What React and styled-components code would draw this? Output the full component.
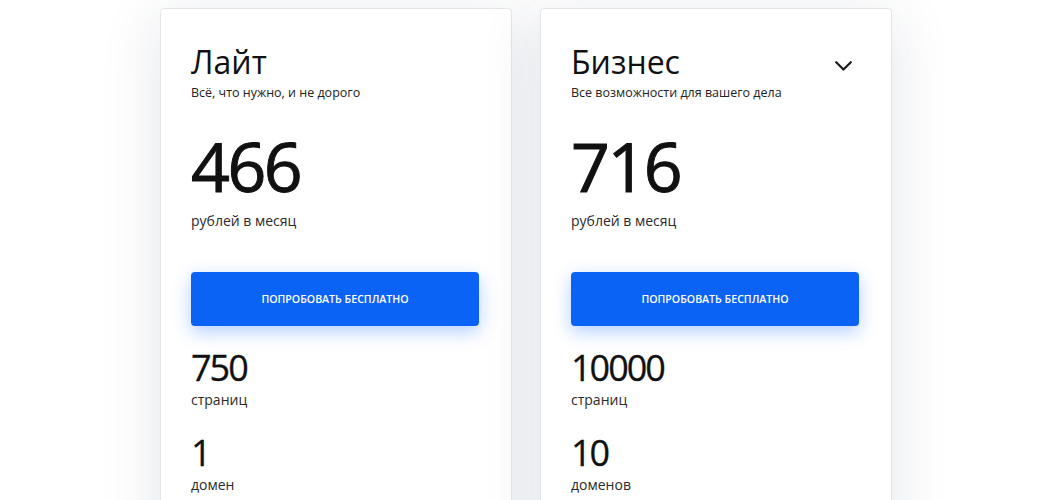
import React from "react";
import styled, { createGlobalStyle } from "styled-components";

const GlobalStyle = createGlobalStyle`
  body {
    margin: 0;
    background: #ffffff;
    font-family: "Open Sans", "Noto Sans", sans-serif;
    color: #111111;
  }
`;

const Page = styled.div`
  display: flex;
  justify-content: center;
  gap: 28px;
  padding: 8px 0 0 8px;
  height: 492px;
  overflow: hidden;
`;

const Card = styled.div`
  box-sizing: border-box;
  width: 352px;
  flex: none;
  align-self: flex-start;
  padding: 33px 32px 40px 30px;
  background: #ffffff;
  border: 1px solid #e3e5ea;
  border-radius: 4px;
  box-shadow: 0 10px 60px rgba(40, 52, 92, 0.13);
`;

const Header = styled.div`
  display: flex;
  justify-content: space-between;
  align-items: flex-start;
`;

const Title = styled.h2`
  margin: 0;
  font-size: 32px;
  line-height: 40px;
  font-weight: 400;
  color: #111111;
`;

const Toggle = styled.button`
  display: flex;
  margin: 19px 7px 0 0;
  padding: 0;
  border: none;
  background: none;
  cursor: pointer;
`;

const Subtitle = styled.p`
  margin: 3px 0 0;
  font-size: 12.5px;
  line-height: 16px;
  color: #222222;
`;

const Price = styled.div`
  margin-top: 30px;
  font-size: 68px;
  line-height: 70px;
  font-weight: 400;
  letter-spacing: -2.5px;
  -webkit-text-stroke: 1px #111111;
  color: #111111;
`;

const Caption = styled.div`
  font-size: 14px;
  line-height: 20px;
  color: #2a2a2a;
`;

const PriceCaption = styled(Caption)`
  margin-top: 10px;
`;

const TryButton = styled.button`
  display: block;
  width: 100%;
  height: 54px;
  margin: 41px 0 19px;
  border: none;
  border-radius: 4px;
  background: #0b63f6;
  color: #ffffff;
  font-family: inherit;
  font-size: 10.6px;
  font-weight: 600;
  text-transform: uppercase;
  box-shadow: 0 6px 18px rgba(11, 99, 246, 0.3);
  cursor: pointer;
`;

const Feature = styled.div`
  margin-bottom: 20px;
`;

const FeatureValue = styled.div`
  font-size: 36px;
  line-height: 45px;
  letter-spacing: -2px;
  -webkit-text-stroke: 0.3px #111111;
  color: #111111;
`;

const Chevron = () => (
  <svg width="17" height="10" viewBox="0 0 17 10" fill="none">
    <polyline
      points="1.2,1.2 8.5,8.5 15.8,1.2"
      stroke="#1a1a1a"
      strokeWidth="2.2"
      strokeLinecap="round"
      strokeLinejoin="round"
    />
  </svg>
);

const plans = [
  {
    name: "Лайт",
    note: "Всё, что нужно, и не дорого",
    price: 466,
    features: [
      ["750", "страниц"],
      ["1", "домен"],
      ["1", "сайт"],
    ],
  },
  {
    name: "Бизнес",
    note: "Все возможности для вашего дела",
    price: 716,
    toggle: true,
    features: [
      ["10000", "страниц"],
      ["10", "доменов"],
      ["10", "сайтов"],
    ],
  },
];

const App = () => (
  <>
    <GlobalStyle />
    <Page>
      {plans.map((plan) => (
        <Card key={plan.name}>
          <Header>
            <Title>{plan.name}</Title>
            {plan.toggle && (
              <Toggle aria-label="Развернуть">
                <Chevron />
              </Toggle>
            )}
          </Header>
          <Subtitle>{plan.note}</Subtitle>
          <Price>{plan.price}</Price>
          <PriceCaption>рублей в месяц</PriceCaption>
          <TryButton>Попробовать бесплатно</TryButton>
          {plan.features.map(([value, label], i) => (
            <Feature key={i}>
              <FeatureValue>{value}</FeatureValue>
              <Caption>{label}</Caption>
            </Feature>
          ))}
        </Card>
      ))}
    </Page>
  </>
);

export default App;
